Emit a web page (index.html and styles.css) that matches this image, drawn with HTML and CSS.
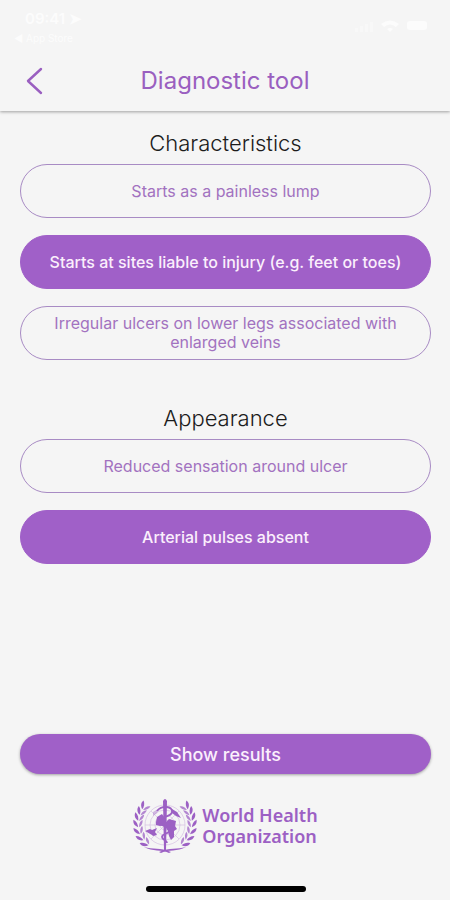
FILE: index.html
```html
<!DOCTYPE html>
<html lang="en">
  <head>
    <meta charset="utf-8">
    <meta name="viewport" content="width=device-width, initial-scale=1">
    <title>Diagnostic tool</title>
    <link rel="stylesheet" href="styles.css">
  </head>
  <body>
    <header class="top">
      <div class="status">
        <div>
          <div class="time">09:41 ➤</div>
          <a class="return" href="#">◀ App Store</a>
        </div>
        <svg class="status-icons" width="76" height="14" viewBox="0 0 76 14" fill="currentColor" aria-hidden="true">
          <path class="faint" d="M1 9h3v4H1zM6 7h3v6H6zM11 5h3v8h-3zM16 3h3v10h-3z"/>
          <path d="M27 5q9-7 18 0l-3 3q-6-5-12 0zM33 10q3-2 6 0l-3 3z"/>
          <rect x="53" y="2" width="20" height="9" rx="3"/>
        </svg>
      </div>
      <div class="bar">
        <a class="back" href="#" aria-label="Back">
          <svg width="18" height="30" viewBox="0 0 18 30" fill="none" stroke="currentColor" stroke-width="2.4" stroke-linecap="round" stroke-linejoin="round">
            <path d="M15 3L2 15L15 27"/>
          </svg>
        </a>
        <h1>Diagnostic tool</h1>
      </div>
    </header>

    <main>
      <section>
        <h2>Characteristics</h2>
        <div class="options">
          <button class="option" type="button" aria-pressed="false">Starts as a painless lump</button>
          <button class="option selected" type="button" aria-pressed="true">Starts at sites liable to injury (e.g. feet or toes)</button>
          <button class="option" type="button" aria-pressed="false">Irregular ulcers on lower legs associated with enlarged veins</button>
        </div>
      </section>
      <section>
        <h2>Appearance</h2>
        <div class="options">
          <button class="option" type="button" aria-pressed="false">Reduced sensation around ulcer</button>
          <button class="option selected" type="button" aria-pressed="true">Arterial pulses absent</button>
        </div>
      </section>
    </main>

    <footer>
      <button class="show-results" type="button">Show results</button>
      <div class="logo">
        <svg width="64" height="56" viewBox="0 0 64 56" fill="currentColor" aria-hidden="true">
          <defs>
            <g id="leaves">
              <path d="M5 27C1 25 0 22 1 19C4 21 5 24 5 27z"/>
              <path d="M6 27C6 24 7 21 10 20C10 23 9 25 6 27z" opacity=".75"/>
            </g>
            <g id="branch">
              <use href="#leaves" transform="rotate(-50 32 26)"/>
              <use href="#leaves" transform="rotate(-35 32 26)"/>
              <use href="#leaves" transform="rotate(-20 32 26)"/>
              <use href="#leaves" transform="rotate(-5 32 26)"/>
              <use href="#leaves" transform="rotate(9 32 26)"/>
              <use href="#leaves" transform="rotate(22 32 26)"/>
              <use href="#leaves" transform="rotate(35 32 26)"/>
              <path d="M11 49C20 52 27 49 38 54L36 55C28 51 20 54 11 49z"/>
            </g>
          </defs>
          <!-- laurel -->
          <use href="#branch"/>
          <use href="#branch" transform="translate(64) scale(-1 1)"/>
          <!-- globe -->
          <g fill="none" stroke="currentColor" stroke-width=".6" opacity=".4">
            <circle cx="32" cy="27" r="20"/>
            <circle cx="32" cy="27" r="15"/>
            <circle cx="32" cy="27" r="10"/>
            <circle cx="32" cy="27" r="5"/>
            <path d="M12 27H52M18 13L46 41M46 13L18 41"/>
          </g>
          <path d="M12 33L17 31L19 32L24 30L22 34L24 37L20 38L19 37z"/>
          <path d="M23 24L24 19L29 16L31 19V27L27 28L23 27z"/>
          <path d="M33 24L36 21L43 23L42 28L44 31L41 33L41 39L38 42L36 38L35 33L33 30z"/>
          <path d="M39 11L44 14L48 20L43 18L39 15z"/>
          <path d="M20 14L25 11L24 15L20 18z" opacity=".4"/>
          <!-- staff and snake -->
          <path d="M30 3Q32 -1 34 3L33 52H31z"/>
          <path d="M24 13C29 7 40 8 39 14C38 20 25 18 26 24C27 29 37 27 37 32C37 36 29 35 29 39C29 42 34 42 34 45" fill="none" stroke="currentColor" stroke-width="1.8"/>
        </svg>
        <div class="logo-name">
          <div>World Health</div>
          <div>Organization</div>
        </div>
      </div>
      <div class="home-indicator"></div>
    </footer>
  </body>
</html>
```
FILE: styles.css
```css
* {
  box-sizing: border-box;
}

body {
  margin: 0;
  min-height: 100vh;
  display: flex;
  flex-direction: column;
  background: #f5f5f5;
  color: #1c1c1c;
  font-family: Inter, Roboto, sans-serif;
}

a {
  color: inherit;
  text-decoration: none;
}

button {
  font-family: inherit;
  cursor: pointer;
}

.top {
  box-shadow: 0 1px 3px rgba(0, 0, 0, 0.35);
}

.status {
  display: flex;
  justify-content: space-between;
  height: 50px;
  padding: 10px 20px 0 14px;
  color: #fcfcfc;
}

.time {
  padding-left: 11px;
  font-size: 15px;
  font-weight: 600;
  line-height: 18px;
}

.return {
  display: block;
  font-size: 10px;
  line-height: 20px;
}

.status-icons {
  margin-top: 9px;
}

.faint {
  opacity: 0.5;
}

.bar {
  display: grid;
  grid-template-columns: 52px 1fr 52px;
  align-items: center;
  height: 61px;
  color: #9a5fc0;
}

.back {
  justify-self: end;
  height: 30px;
  padding-right: 8px;
}

h1 {
  margin: 0;
  font-size: 24px;
  font-weight: 400;
  line-height: 32px;
  text-align: center;
}

main {
  flex: 1;
  padding: 18px 19px 0 20px;
}

section {
  margin-bottom: 44px;
}

h2 {
  margin: 0 0 7px;
  font-size: 22px;
  font-weight: 300;
  line-height: 28px;
  text-align: center;
}

.options {
  display: grid;
  gap: 17px;
}

.option {
  min-height: 54px;
  padding: 6px 20px;
  border: 1px solid #a88bc4;
  border-radius: 27px;
  background: none;
  color: #a272c0;
  font-size: 16px;
  line-height: 19px;
}

.selected {
  border-color: #a060c8;
  background: #a060c8;
  color: #fbeffc;
  font-weight: 500;
}

footer {
  display: flex;
  flex-direction: column;
  align-items: center;
  padding: 0 19px 8px 20px;
}

.show-results {
  width: 100%;
  height: 40px;
  border: 0;
  border-radius: 20px;
  background: #a060c8;
  box-shadow: 0 1px 3px rgba(0, 0, 0, 0.35);
  color: #fbeffc;
  font-size: 18px;
  font-weight: 500;
}

.logo {
  display: flex;
  align-items: center;
  gap: 5px;
  margin: 24px 0 32px;
  color: #9c60c4;
}

.logo-name {
  font-family: "Noto Sans", "Open Sans", sans-serif;
  font-size: 18px;
  font-weight: 600;
  line-height: 21px;
}

.home-indicator {
  width: 160px;
  height: 6px;
  border-radius: 3px;
  background: #000;
}
```
